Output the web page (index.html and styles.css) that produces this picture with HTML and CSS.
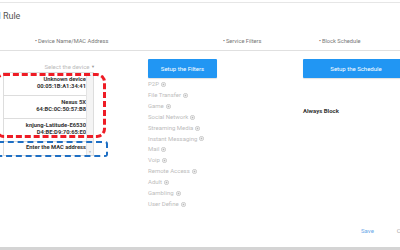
FILE: index.html
```html
<!DOCTYPE html>
<html>
<head>
    <meta charset="utf-8">
    <link rel="stylesheet" href="styles.css">
</head>
<body>
    <div class="page">
        <div class="head">
            <h1 class="title">Parental Control Rule</h1>
            <ul class="steps">
                <li class="step">Device Name/MAC Address</li>
                <li class="step">Service Filters</li>
                <li class="step">Block Schedule</li>
            </ul>
        </div>

        <div class="main">
            <section class="col col-device">
                <div class="select-label">Select the device <span class="caret">&#9660;</span></div>
                <div class="device-wrap">
                    <ul class="device-list">
                        <li class="device"><b>Unknown device</b><b>00:05:1B:A1:34:41</b></li>
                        <li class="device"><b>Nexus 5X</b><b>64:BC:0C:50:57:B8</b></li>
                        <li class="device"><b>knjung-Latitude-E6530</b><b>D4:BE:D9:70:65:E0</b></li>
                        <li class="device device-mac"><b>Enter the MAC address</b></li>
                    </ul>
                    <div class="scrollbar">
                        <span class="arrow">&#9650;</span>
                        <span class="arrow">&#9660;</span>
                    </div>
                    <div class="mark mark-red"></div>
                    <div class="mark mark-blue"></div>
                </div>
            </section>

            <section class="col col-filter">
                <button class="btn">Setup the Filters</button>
                <ul class="filters">
                    <li>P2P <svg class="ico" viewBox="0 0 10 10"><circle cx="5" cy="5" r="4.2"/><path d="M3 5h4M5 3v4"/></svg></li>
                    <li>File Transfer <svg class="ico" viewBox="0 0 10 10"><circle cx="5" cy="5" r="4.2"/><path d="M3 5h4M5 3v4"/></svg></li>
                    <li>Game <svg class="ico" viewBox="0 0 10 10"><circle cx="5" cy="5" r="4.2"/><path d="M3 5h4M5 3v4"/></svg></li>
                    <li>Social Network <svg class="ico" viewBox="0 0 10 10"><circle cx="5" cy="5" r="4.2"/><path d="M3 5h4M5 3v4"/></svg></li>
                    <li>Streaming Media <svg class="ico" viewBox="0 0 10 10"><circle cx="5" cy="5" r="4.2"/><path d="M3 5h4M5 3v4"/></svg></li>
                    <li>Instant Messaging <svg class="ico" viewBox="0 0 10 10"><circle cx="5" cy="5" r="4.2"/><path d="M3 5h4M5 3v4"/></svg></li>
                    <li>Mail <svg class="ico" viewBox="0 0 10 10"><circle cx="5" cy="5" r="4.2"/><path d="M3 5h4M5 3v4"/></svg></li>
                    <li>Voip <svg class="ico" viewBox="0 0 10 10"><circle cx="5" cy="5" r="4.2"/><path d="M3 5h4M5 3v4"/></svg></li>
                    <li>Remote Access <svg class="ico" viewBox="0 0 10 10"><circle cx="5" cy="5" r="4.2"/><path d="M3 5h4M5 3v4"/></svg></li>
                    <li>Adult <svg class="ico" viewBox="0 0 10 10"><circle cx="5" cy="5" r="4.2"/><path d="M3 5h4M5 3v4"/></svg></li>
                    <li>Gambling <svg class="ico" viewBox="0 0 10 10"><circle cx="5" cy="5" r="4.2"/><path d="M3 5h4M5 3v4"/></svg></li>
                    <li>User Define <svg class="ico" viewBox="0 0 10 10"><circle cx="5" cy="5" r="4.2"/><path d="M3 5h4M5 3v4"/></svg></li>
                </ul>
            </section>

            <section class="col col-schedule">
                <button class="btn btn-wide">Setup the Schedule</button>
                <p class="always">Always Block</p>
            </section>
        </div>

        <div class="foot">
            <a class="link save">Save</a>
            <a class="link cancel">Cancel</a>
        </div>
        <div class="bottom-bar"></div>
    </div>
</body>
</html>
```

FILE: styles.css
```css
html, body {
    margin: 0;
    padding: 0;
    background: #fff;
}
body {
    font-family: Roboto, "Liberation Sans", Arial, sans-serif;
    color: #333;
    width: 400px;
    height: 250px;
    overflow: hidden;
}
ul {
    list-style: none;
    margin: 0;
    padding: 0;
}
.page {
    box-sizing: border-box;
    padding-top: 2px;
    height: 250px;
    display: flex;
    flex-direction: column;
}

/* header */
.head {
    border-top: 1px solid #e6e6e6;
    border-bottom: 1px solid #e0e0e0;
    height: 47px;
    flex: none;
}
.title {
    margin: 8px 0 0 -64px;
    font-size: 9px;
    line-height: 11px;
    font-weight: normal;
    color: #555;
    white-space: nowrap;
}
.steps {
    display: grid;
    grid-template-columns: 188px 96px 1fr;
    padding-left: 35px;
    margin-top: 15px;
}
.step {
    font-size: 5.7px;
    line-height: 8px;
    color: #777;
    white-space: nowrap;
}
.step::before {
    content: "\2022";
    margin-right: 1px;
    color: #555;
}

/* columns */
.main {
    display: grid;
    grid-template-columns: 148px 155px 1fr;
    padding-top: 8px;
    flex: 1;
}
.btn {
    display: block;
    border: none;
    border-radius: 1px;
    background: #2196f3;
    color: #fff;
    font-family: inherit;
    font-size: 6px;
    width: 69px;
    height: 19px;
    padding: 0;
    box-shadow: 0 1px 1px rgba(0,0,0,0.12);
}
.btn-wide {
    width: 106px;
}

/* device column */
.col-device {
    padding-top: 4px;
}
.select-label {
    width: 95px;
    text-align: right;
    font-size: 6px;
    line-height: 8px;
    color: #bbb;
    margin-bottom: 1px;
}
.caret {
    font-size: 4px;
    color: #999;
    vertical-align: middle;
}
.device-wrap {
    position: relative;
    margin-left: 3px;
    width: 91px;
    border: 1px solid #ddd;
    box-sizing: border-box;
}
.device-list {
    margin-right: 6px;
}
.device {
    display: flex;
    flex-direction: column;
    align-items: flex-end;
    padding: 3px 1px 5px 0;
    border-bottom: 1px solid #ddd;
    font-size: 5.8px;
    line-height: 7px;
    color: #333;
}
.device-mac {
    border-bottom: none;
    padding: 2px 1px 4px 0;
}
.scrollbar {
    position: absolute;
    top: 0;
    right: 0;
    bottom: 0;
    width: 6px;
    background: #f4f4f4;
    border-left: 1px solid #e4e4e4;
    display: flex;
    flex-direction: column;
    justify-content: space-between;
    align-items: center;
}
.arrow {
    font-size: 3px;
    line-height: 5px;
    color: #aaa;
}
.mark {
    position: absolute;
    box-sizing: border-box;
}
.mark-red {
    left: -9px;
    top: 0;
    width: 111px;
    height: 65px;
    border: 3px dashed #ee1c25;
    border-radius: 9px;
}
.mark-blue {
    left: -9px;
    top: 68px;
    width: 113px;
    height: 16px;
    border: 2px dashed #1e6fc4;
    border-radius: 3px;
}

/* filters column */
.filters {
    margin-top: 1px;
}
.filters li {
    font-size: 6px;
    line-height: 10.9px;
    color: #bdbdbd;
    display: flex;
    align-items: center;
    gap: 2px;
}
.ico {
    width: 5px;
    height: 5px;
    fill: none;
    stroke: #aaa;
    stroke-width: 1.2;
}

/* schedule column */
.always {
    margin: 29px 0 0;
    font-size: 6px;
    font-weight: bold;
    line-height: 8px;
    color: #333;
}

/* footer */
.foot {
    display: flex;
    padding-left: 361px;
    gap: 23px;
    height: 20px;
    flex: none;
}
.link {
    font-size: 6px;
    line-height: 8px;
    color: #6aa7e8;
    white-space: nowrap;
}
.cancel {
    color: #aaa;
}
.bottom-bar {
    height: 3px;
    flex: none;
    background: #d4d4d4;
}
```
